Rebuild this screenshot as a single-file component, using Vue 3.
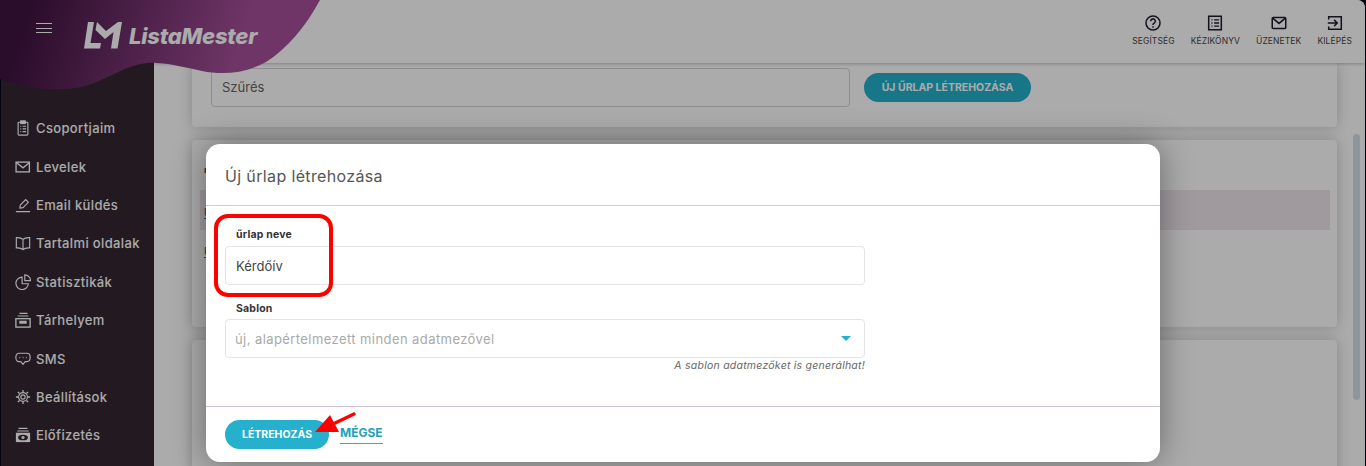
<script setup>
const menu = [
  { label: 'Csoportjaim', icon: 'clip' },
  { label: 'Levelek', icon: 'mail' },
  { label: 'Email küldés', icon: 'pen' },
  { label: 'Tartalmi oldalak', icon: 'book' },
  { label: 'Statisztikák', icon: 'pie' },
  { label: 'Tárhelyem', icon: 'box' },
  { label: 'SMS', icon: 'sms' },
  { label: 'Beállítások', icon: 'gear' },
  { label: 'Előfizetés', icon: 'sub' }
]
</script>

<template>
  <div class="root">
    <div class="shell">
      <aside class="sidebar">
        <nav class="menu">
          <a v-for="m in menu" :key="m.label" class="menu-item">
            <svg class="menu-icon" viewBox="0 0 18 18" fill="none" stroke="currentColor" stroke-width="1.3">
              <template v-if="m.icon === 'clip'">
                <rect x="3.5" y="2.5" width="11" height="14.5" rx="1" />
                <rect x="6.5" y="1" width="5" height="3" fill="currentColor" />
                <path d="M6 7h1M8.5 7H12.500M6 10h1M8.500 10H12.500M6 13h1M8.500 13H12.500" />
              </template>
              <template v-else-if="m.icon === 'mail'">
                <rect x="1.200" y="3.500" width="15" height="11" stroke-width="1.500" />
                <path d="M1.500 4l7.500 6 7.500-6" stroke-width="1.500" />
              </template>
              <template v-else-if="m.icon === 'pen'">
                <path d="M5.500 12.500l.5-3.500 6-6 3 3-6 6z" />
                <path d="M1 16.500h16" stroke-width="1.500" />
              </template>
              <template v-else-if="m.icon === 'book'">
                <path d="M9 5C7.500 3.500 4.500 2.800 1.500 3v11.500c3-.2 6 .5 7.500 2 1.500-1.500 4.500-2.200 7.500-2V3C13.500 2.800 10.500 3.500 9 5zM9 5v11.500" />
              </template>
              <template v-else-if="m.icon === 'pie'">
                <path d="M8 3.500a7 7 0 1 0 7 7.500H8z" />
                <path d="M11 1v6.500h6.500A6.500 6.500 0 0 0 11 1z" />
              </template>
              <template v-else-if="m.icon === 'box'">
                <path d="M5 1.500h9M3 4.500h12" />
                <rect x="1" y="7.500" width="16" height="9.500" stroke-width="1.500" />
                <rect x="5.500" y="10.500" width="7" height="2" fill="currentColor" />
              </template>
              <template v-else-if="m.icon === 'sms'">
                <path d="M4.500 2.500h9a3.500 4 0 0 1 3.500 4v1.500a3.500 4 0 0 1-3.500 4H11.500L9 15l-2.500-3H4.500A3.500 4 0 0 1 1 8V6.500a3.500 4 0 0 1 3.500-4z" />
                <path d="M5 7.300h.9M8.600 7.300h.9M12.200 7.300h.9" stroke-width="1.600" />
              </template>
              <template v-else-if="m.icon === 'gear'">
                <circle cx="9" cy="9" r="5" />
                <circle cx="9" cy="9" r="2.400" />
                <path d="M9 1v2.500M9 14.500V17M1 9h2.500M14.500 9H17M3.300 3.300l1.800 1.800M12.900 12.900l1.800 1.800M14.700 3.300l-1.800 1.800M5.100 12.900l-1.800 1.800" stroke-width="1.500" />
              </template>
              <template v-else>
                <path d="M4 1.500h10M2.500 4.500h13" />
                <rect x="1" y="6.500" width="16" height="10.500" fill="currentColor" stroke="none" />
                <ellipse cx="9" cy="11.800" rx="5.500" ry="3.200" fill="#342730" stroke="none" />
                <circle cx="9" cy="11.800" r="1.800" fill="currentColor" stroke="none" />
              </template>
            </svg>
            <span>{{ m.label }}</span>
          </a>
        </nav>
      </aside>

      <div class="content">
        <header class="topbar">
          <a class="top-item">
            <svg viewBox="0 0 20 20" fill="none" stroke="currentColor" stroke-width="1.700">
              <circle cx="10" cy="10" r="7.800" />
              <path d="M7.500 8a2.500 2.500 0 1 1 3.800 2.100c-.9.600-1.300 1-1.300 2" />
              <path d="M10 13.700v1.500" />
            </svg>
            <span>Segítség</span>
          </a>
          <a class="top-item">
            <svg viewBox="0 0 20 20" fill="none" stroke="currentColor" stroke-width="1.700">
              <rect x="3" y="2.500" width="14" height="15" />
              <path d="M6 6.500h1.200M9 6.500h5.500M6 10h1.200M9 10h5.500M6 13.500h1.200M9 13.500h5.500" stroke-width="1.400" />
            </svg>
            <span>Kézikönyv</span>
          </a>
          <a class="top-item">
            <svg viewBox="0 0 20 20" fill="none" stroke="currentColor" stroke-width="1.700">
              <rect x="2.500" y="4" width="15" height="12" rx="1" />
              <path d="M3 4.500l7 6 7-6" />
            </svg>
            <span>Üzenetek</span>
          </a>
          <a class="top-item">
            <svg viewBox="0 0 20 20" fill="none" stroke="currentColor" stroke-width="1.700">
              <path d="M3 6V3h14v14H3v-3" />
              <path d="M2 10h10M9 6.500l3.500 3.500L9 13.500" />
            </svg>
            <span>Kilépés</span>
          </a>
        </header>

        <main class="main">
          <section class="card card-filter">
            <div class="filter-input">Szűrés</div>
            <button class="new-btn">ÚJ ŰRLAP LÉTREHOZÁSA</button>
          </section>
          <section class="card card-list">
            <div class="list-head">név</div>
            <div class="list-row"><a class="list-link">Űrlap</a></div>
            <a class="list-link list-link-2">Űrlap</a>
          </section>
          <section class="card card-rest"></section>
          <div class="scroll-thumb"></div>
        </main>
      </div>
    </div>

    <svg class="blob" viewBox="0 0 330 100" aria-hidden="true">
      <defs>
        <linearGradient id="blobGrad" x1="30" y1="5" x2="235" y2="70" gradientUnits="userSpaceOnUse">
          <stop offset="0" stop-color="#3f1340" />
          <stop offset="1" stop-color="#a6509a" />
        </linearGradient>
      </defs>
      <path
        d="M0 0H320C306 26 288 48 266 62C244 74 222 75 202 71C182 67 164 62 147 63C126 65 108 79 88 85C66 92 30 91 0 79Z"
        fill="url(#blobGrad)"
      />
    </svg>

    <button class="burger" aria-label="Menü"><i></i><i></i><i></i></button>
    <div class="logo">
      <svg class="logo-mark" viewBox="0 0 38 28">
        <path d="M4 1h6L6.500 22H17l-1 5.500H0z" fill="#fff" />
        <path d="M13 1l9 9 12-9h4l-4.500 26.500H27L29.500 11 21 18 11.500 9z" fill="#fff" />
      </svg>
      <span class="logo-text">ListaMester</span>
    </div>

    <div class="backdrop"></div>

    <div class="modal">
      <div class="modal-head">Új űrlap létrehozása</div>
      <div class="modal-body">
        <label class="field-label">űrlap neve</label>
        <div class="field">Kérdőív</div>
        <label class="field-label field-label-2">Sablon</label>
        <div class="field field-select">
          <span>új, alapértelmezett minden adatmezővel</span>
          <i class="caret"></i>
        </div>
        <div class="hint">A sablon adatmezőket is generálhat!</div>
      </div>
      <div class="modal-foot">
        <button class="create-btn">LÉTREHOZÁS</button>
        <a class="cancel">MÉGSE</a>
      </div>
    </div>

    <div class="highlight"></div>
    <svg class="arrow" viewBox="0 0 50 30" aria-hidden="true">
      <path d="M43 4L20 15" stroke="#f00" stroke-width="3.500" stroke-linecap="round" fill="none" />
      <path d="M4 22L19 5l9 17z" fill="#f00" />
    </svg>
  </div>
</template>

<style>
html, body { margin: 0; background: #0c0c1e; overflow: hidden; }
</style>

<style scoped>
.root {
  position: relative;
  width: 1366px;
  height: 466px;
  overflow: hidden;
  background: #07071a;
  font-family: Inter, "Noto Sans", sans-serif;
}
.shell {
  display: flex;
  height: 466px;
  margin: 0 1px;
  border-radius: 8px 8px 0 0;
  overflow: hidden;
  background: #fff;
}
.sidebar {
  flex: 0 0 153px;
  background: #342730;
  color: #fff;
}
.menu {
  display: flex;
  flex-direction: column;
  padding-top: 109px;
}
.menu-item {
  display: flex;
  align-items: center;
  gap: 5px;
  height: 38.400px;
  padding-left: 14px;
  font-size: 13px;
  font-weight: 500;
  letter-spacing: .36px;
  color: #fff;
  white-space: nowrap;
}
.menu-icon { width: 16px; height: 16px; flex: none; }

.content {
  flex: 1;
  min-width: 0;
  display: flex;
  flex-direction: column;
  position: relative;
  z-index: 0;
}
.topbar {
  position: relative;
  z-index: 1;
  height: 63px;
  flex: none;
  display: flex;
  justify-content: flex-end;
  align-items: flex-start;
  padding: 14px 13px 0 0;
  background: #fff;
  box-shadow: 0 1px 3px rgba(0, 0, 0, .25);
  box-sizing: border-box;
}
.top-item {
  display: flex;
  flex-direction: column;
  align-items: center;
  margin-left: 16px;
  color: #1f1f2b;
}
.top-item svg { width: 18px; height: 18px; }
.top-item span {
  margin-top: 3px;
  font-size: 8.500px;
  line-height: 12px;
  letter-spacing: .1px;
  text-transform: uppercase;
  color: #444;
  white-space: nowrap;
}
.main {
  position: relative;
  flex: 1;
  min-height: 0;
  overflow: hidden;
  display: flex;
  flex-direction: column;
  gap: 13px;
  padding: 0 28px 0 38px;
  background: #fff;
}
.card {
  flex: none;
  background: #fff;
  border-radius: 0 0 4px 4px;
  box-shadow: 0 0 14px rgba(0, 0, 0, .22);
  box-sizing: border-box;
}
.card-filter {
  height: 64px;
  display: flex;
  align-items: flex-start;
  padding: 5px 0 0 19px;
}
.filter-input {
  width: 639px;
  height: 39px;
  box-sizing: border-box;
  padding-left: 10px;
  line-height: 37px;
  border: 1px solid #d4d4d4;
  border-radius: 4px;
  font-size: 13px;
  color: #666;
}
.new-btn {
  margin: 5px 0 0 14px;
  width: 167px;
  height: 29px;
  padding: 0;
  border: 0;
  border-radius: 15px;
  background: #25b0cd;
  color: #fff;
  font: 700 10.500px Inter, sans-serif;
}
.card-list {
  height: 187px;
  border-radius: 4px;
  padding: 24px 7px 0 8px;
}
.list-head { height: 26px; font-size: 9px; font-weight: 700; color: #444; padding-left: 4px; }
.list-row {
  height: 40px;
  padding: 11px 0 0 4px;
  box-sizing: border-box;
  background: #efe6ec;
}
.list-link { color: #178 ; font-size: 12px; font-weight: 600; text-decoration: underline; }
.list-link-2 { display: block; margin: 14px 0 0 4px; }
.card-rest { height: 160px; border-radius: 4px 4px 0 0; }
.scroll-thumb {
  position: absolute;
  left: 1199px;
  top: 71px;
  width: 7px;
  height: 266px;
  border-radius: 4px;
  background: #d2e0e9;
}

.blob {
  position: absolute;
  left: 0;
  top: 0;
  width: 330px;
  height: 100px;
}
.burger {
  position: absolute;
  left: 36px;
  top: 23px;
  width: 16px;
  height: 10px;
  padding: 0;
  border: 0;
  background: none;
  display: flex;
  flex-direction: column;
  justify-content: space-between;
}
.burger i { display: block; height: 1px; background: #fff; }
.logo {
  position: absolute;
  left: 84px;
  top: 20px;
  display: flex;
  align-items: center;
  gap: 7px;
  color: #fff;
}
.logo-mark { width: 38px; height: 28px; }
.logo-text {
  padding-top: 2px;
  font-size: 22px;
  line-height: 28px;
  font-weight: 800;
  font-style: italic;
  letter-spacing: -.2px;
  white-space: nowrap;
}

.backdrop {
  position: absolute;
  inset: 0;
  background: rgba(0, 0, 0, .33);
}
.modal {
  position: absolute;
  left: 206px;
  top: 144px;
  width: 954px;
  height: 318px;
  display: flex;
  flex-direction: column;
  background: #fff;
  border-radius: 14px;
  box-shadow: 0 0 32px rgba(0, 0, 0, .38);
  color: #444;
}
.modal-head {
  height: 62px;
  box-sizing: border-box;
  flex: none;
  padding-left: 19px;
  line-height: 64px;
  font-size: 16px;
  letter-spacing: .36px;
  color: #555;
  border-bottom: 1px solid #cfcbce;
}
.modal-body {
  flex: 1;
  padding: 21px 0 0 19px;
  box-sizing: border-box;
  width: 659px;
}
.field-label {
  display: block;
  height: 16px;
  margin: 0 0 3px 11px;
  font-size: 10.500px;
  line-height: 16px;
  font-weight: 700;
  letter-spacing: .2px;
  color: #333;
}
.field-label-2 { margin-top: 16px; margin-bottom: 2px; }
.field {
  height: 39px;
  box-sizing: border-box;
  padding-left: 10px;
  display: flex;
  align-items: center;
  border: 1px solid #e4e4e4;
  border-radius: 4px;
  font-size: 13px;
  color: #444;
}
.field-select {
  justify-content: space-between;
  padding-right: 13px;
  color: #a9a9a9;
  letter-spacing: .42px;
  padding-left: 9px;
}
.caret {
  width: 0;
  height: 0;
  border: 5px solid transparent;
  border-top: 5px solid #25b0cd;
  border-bottom: 0;
}
.hint {
  margin-top: 1px;
  text-align: right;
  font-size: 10.500px;
  line-height: 14px;
  font-style: italic;
  letter-spacing: .24px;
  color: #666;
}
.modal-foot {
  flex: none;
  height: 56px;
  box-sizing: border-box;
  padding: 13px 0 0 19px;
  display: flex;
  align-items: flex-start;
  gap: 11px;
  border-top: 1px solid #cfc4cf;
}
.create-btn {
  width: 104px;
  height: 29px;
  padding: 0;
  border: 0;
  border-radius: 15px;
  background: #25b0cd;
  color: #fff;
  font: 700 10.500px Inter, sans-serif;
}
.cancel {
  margin-top: 5px;
  height: 18px;
  line-height: 16px;
  font-size: 12px;
  font-weight: 700;
  color: #25a0bb;
  border-bottom: 1px solid #25b0cd;
}
.highlight {
  position: absolute;
  left: 214px;
  top: 214px;
  width: 119px;
  height: 83px;
  box-sizing: border-box;
  border: 4px solid #f00;
  border-radius: 14px;
}
.arrow {
  position: absolute;
  left: 311px;
  top: 410px;
  width: 50px;
  height: 30px;
}
</style>
